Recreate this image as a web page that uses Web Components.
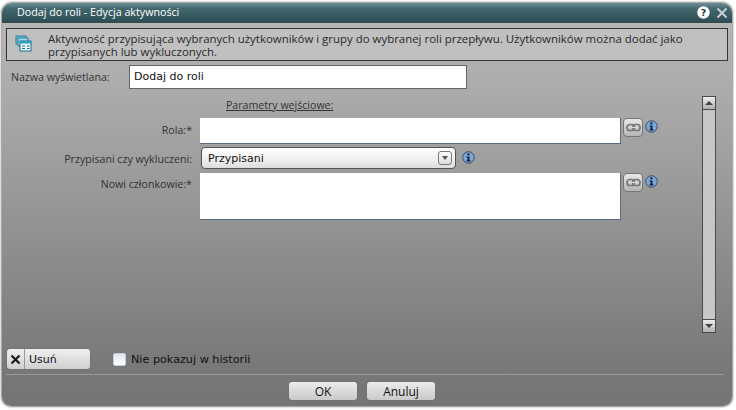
<!DOCTYPE html>
<html lang="pl"><head><meta charset="utf-8"><style>
html,body{margin:0;padding:0;background:#fff;overflow:hidden}
body{font:11px "DejaVu Sans",Verdana,sans-serif;color:#222;width:736px;height:410px}
</style></head><body>
<wf-dialog heading="Dodaj do roli - Edycja aktywności">
  <wf-infobar>Aktywność przypisująca wybranych użytkowników i grupy do wybranej roli przepływu. Użytkowników można dodać jako przypisanych lub wykluczonych.</wf-infobar>
  <wf-name-row label="Nazwa wyświetlana:" value="Dodaj do roli"></wf-name-row>
  <wf-params heading="Parametry wejściowe:">
    <wf-field label="Rola:*" kind="input" link></wf-field>
    <wf-field label="Przypisani czy wykluczeni:" kind="select" value="Przypisani"></wf-field>
    <wf-field label="Nowi członkowie:*" kind="area" link></wf-field>
  </wf-params>
  <wf-tools slot="tools"></wf-tools>
  <wf-btn slot="footer">OK</wf-btn>
  <wf-btn slot="footer">Anuluj</wf-btn>
</wf-dialog>
<script>
const TAH='"Open Sans","Noto Sans",sans-serif';
const ICON={
info:`<svg width="13" height="13" viewBox="0 0 14 14"><circle cx="7" cy="7" r="6.2" fill="#7ba6dc" stroke="#33465f"/><rect x="5.8" y="2.6" width="2.2" height="2" fill="#101820"/><path d="M4.9 5.8H8v4.2h1.1v1.2H4.9V10H6V7H4.9z" fill="#101820"/></svg>`,
link:`<svg width="15" height="9" viewBox="0 0 15 9" fill="none"><rect x="1" y="1.5" width="7.5" height="6" rx="2.8" stroke="#777" stroke-width="1.7"/><rect x="6.5" y="1.5" width="7.5" height="6" rx="2.8" stroke="#777" stroke-width="1.7"/><path d="M4 4.5h7" stroke="#ddd" stroke-width="1.2"/></svg>`
};
function def(name,css,html){
  customElements.define(name,class extends HTMLElement{
    connectedCallback(){
      if(this.shadowRoot)return;
      const r=this.attachShadow({mode:'open'});
      const a=n=>this.getAttribute(n)||'';
      r.innerHTML=`<style>${css}</style>`+(typeof html==='function'?html(a,this):html);
    }
  });
}
def('wf-dialog',`
:host{display:flex;flex-direction:column;box-sizing:border-box;width:730px;height:403px;margin:3px 0 0 2px;border-radius:10px 10px 9px 9px;overflow:hidden;
 background:linear-gradient(#b9b9b9 0,#a9a9a9 25%,#8f8f8f 60%,#777 92%,#757575 100%);box-shadow:0 0 2px 1px #8a8a8a}
.t{flex:none;height:19px;display:flex;align-items:center;padding:0 4px 0 15px;color:#fff;background:linear-gradient(#6d9095 0,#42686e 30%,#2d4d53 100%);border-bottom:1px solid #3a4a4c;font:10.7px/19px ${TAH}}
.t span{flex:1}
.t svg{display:block}
.h{margin-right:6px}
main{flex:1;display:flex;flex-direction:column;padding:5px 4px 0;min-height:0}
.tools{flex:none;padding:0 1px}
.f{flex:none;height:30px;margin:5px 4px 0 0;border-top:1px solid #9a9a9a;box-sizing:border-box;display:flex;justify-content:center;gap:10px;padding:7px 6px 0 0}
`,(a)=>`<div class="t"><span>${a('heading')}</span>
<svg class="h" width="13" height="13" viewBox="0 0 13 13"><circle cx="6.5" cy="6.5" r="6.2" fill="#fff"/><text x="6.5" y="10" text-anchor="middle" font-family="DejaVu Sans" font-weight="700" font-size="9.5" fill="#234">?</text></svg>
<svg width="12" height="12" viewBox="0 0 12 12"><path d="M1.5 1.5l9 9M10.5 1.5l-9 9" stroke="#c4d0d2" stroke-width="2"/></svg></div>
<main><slot></slot><div class="tools"><slot name="tools"></slot></div><div class="f"><slot name="footer"></slot></div></main>`);
def('wf-infobar',`
:host{display:flex;box-sizing:border-box;height:33px;width:722px;border:1px solid #333;background:#c0c0c0;color:#2a2a2a;font:11.45px/13px ${TAH};padding:3px 8px 0 8px;gap:16px;flex:none}
svg{flex:none;margin-top:3px}`,
`<svg width="17" height="17" viewBox="0 0 17 17"><rect x="1" y="1" width="10" height="8" fill="#7fc4d8" stroke="#1f7f9f"/><rect x="3" y="3" width="10" height="8" fill="#a8dcea" stroke="#1f7f9f"/><rect x="5" y="6" width="11" height="10" fill="#e8f6fa" stroke="#14708e"/><rect x="5" y="6" width="11" height="2.5" fill="#2f9dbd"/><path d="M7 11h3M7 13.5h3M12 11h2.5M12 13.5h2.5" stroke="#14708e"/></svg><div><slot></slot></div>`);
def('wf-name-row',`
:host{display:flex;align-items:center;flex:none;height:24px;margin-top:4px;padding-left:5px;color:#333}
label{width:118px;font:10.6px ${TAH}}
.i{box-sizing:border-box;width:338px;height:24px;background:#fff;border:1px solid #666;color:#111;padding:0 0 0 4px;line-height:22px}`,
a=>`<label>${a('label')}</label><div class="i">${a('value')}</div>`);
def('wf-params',`
:host{display:flex;flex:none;height:237px;margin-top:7px;position:relative}
.c{flex:1;min-width:0}
h4{margin:2px 0 5px;font:10.6px/15px ${TAH};text-decoration:underline;padding:0 0 0 220px;height:15px;color:#333}
.rows{display:flex;flex-direction:column;gap:3px}
.sb{flex:none;width:14px;margin-right:12px;display:flex;flex-direction:column;box-sizing:border-box;border:1px solid #4a4a4a;background:#c8c6c6}
.b{height:12px;background:linear-gradient(#eee,#b0b0b0);display:flex;align-items:center;justify-content:center}
.m{flex:1;border-top:1px solid #4a4a4a;border-bottom:1px solid #4a4a4a}
.a{width:0;height:0;border-left:4px solid transparent;border-right:4px solid transparent}`,
a=>`<div class="c"><h4>${a('heading')}</h4><div class="rows"><slot></slot></div></div>
<div class="sb"><div class="b"><i class="a" style="border-bottom:4px solid #444"></i></div><div class="m"></div><div class="b"><i class="a" style="border-top:4px solid #444"></i></div></div>`);
def('wf-field',`
:host{display:flex;align-items:flex-start;color:#333}
label{width:186px;text-align:right;flex:none;margin-right:8px;font:10.65px/14px ${TAH};padding-top:5px}
.inp{box-sizing:border-box;width:421px;height:26px;background:#fff;border:1px solid #5a6a80;border-width:0 1px 1px 0;flex:none}
.area{height:47px;margin-top:1px}
.sel{box-sizing:border-box;width:255px;height:22px;margin-left:1px;border:1px solid #555;border-radius:4px;background:linear-gradient(#fff,#ebebeb 70%,#dcdcdc);padding:0 3px 0 6px;display:flex;align-items:center;justify-content:space-between;color:#111;flex:none}
.dd{box-sizing:border-box;width:14px;height:14px;border:1px solid #777;border-radius:3px;background:linear-gradient(#fdfdfd,#ddd);display:flex;align-items:center;justify-content:center}
.dd i{width:0;height:0;border:3px solid transparent;border-top:4px solid #555;border-bottom:0}
.lk{box-sizing:border-box;width:20px;height:19px;margin:0 2px;border:1px solid #777;border-radius:4px;background:linear-gradient(#e8e8e8,#b5b5b5);display:flex;align-items:center;justify-content:center;flex:none}
.ic{flex:none;margin-top:2px}.ic svg{display:block}
.sel + .ic{margin-left:6px;margin-top:4px}
:host([kind=area]) .lk{margin-top:1px}
:host([kind=area]) .ic{margin-top:3px}`,
(a)=>{const k=a('kind');
 const ctl=k==='select'?`<div class="sel"><span>${a('value')}</span><div class="dd"><i></i></div></div>`:`<div class="inp ${k==='area'?'area':''}"></div><div class="lk">${ICON.link}</div>`;
 return `<label>${a('label')}</label>${ctl}<div class="ic">${ICON.info}</div>`;});
def('wf-tools',`
:host{display:flex;align-items:center;height:20px;margin-top:16px;color:#111}
.x{box-sizing:border-box;width:83px;height:20px;display:flex;align-items:center;border-radius:3px;background:linear-gradient(#f0f0f0,#cfcfcf);box-shadow:0 0 1px #555}
.x b{width:18px;height:20px;display:flex;align-items:center;justify-content:center;border-right:1px solid #999;box-sizing:border-box}
.x span{padding-left:4px}
.c{box-sizing:border-box;width:13px;height:13px;margin:0 5px 0 23px;background:linear-gradient(#dfe7f3,#fff);border:1px solid #c5cfdd;border-radius:2px}
.n{font-size:11.2px}`,
`<div class="x"><b><svg width="11" height="11" viewBox="0 0 11 11"><path d="M1.5 1.5l8 8M9.5 1.5l-8 8" stroke="#1a1a1a" stroke-width="2.2"/></svg></b><span>Usuń</span></div><div class="c"></div><span class="n">Nie pokazuj w historii</span>`);
def('wf-btn',`
:host{box-sizing:border-box;display:flex;align-items:center;justify-content:center;width:68px;height:18px;border-radius:3px;background:linear-gradient(#ececec,#c9c9c9);box-shadow:0 0 1px #555;color:#111;font:12px ${TAH}}`,
`<slot></slot>`);
</script></body></html>
